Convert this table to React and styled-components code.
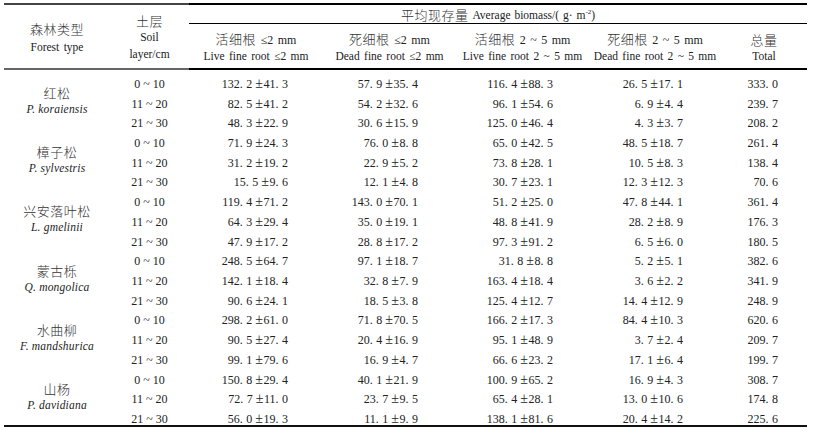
import React from "react";
import styled, { createGlobalStyle } from "styled-components";

const COLS = "106px 79px 134px 133px 133px 132px 86px";

const Global = createGlobalStyle`
  html, body { margin: 0; padding: 0; background: #fff; }
  body { font-family: "Liberation Serif", "Noto Sans CJK SC", serif; color: #222; }
`;

const Page = styled.div`
  padding: 3px 0 0 4px;
  width: 803px;
`;

const HeaderGrid = styled.div`
  display: grid;
  grid-template-columns: ${COLS};
  grid-template-rows: 2px 18px 1px 44px 2px;
`;

const Rule = styled.div`
  grid-row: ${(p) => p.$row};
  grid-column: ${(p) => p.$col};
  background: ${(p) => p.$tone};
`;

const HeadStack = styled.div`
  grid-row: 2 / 5;
  grid-column: ${(p) => p.$col};
  display: flex;
  flex-direction: column;
  align-items: center;
  justify-content: center;
  padding-top: ${(p) => p.$pt || 0}px;
  line-height: ${(p) => p.$lh}px;
`;

const Title = styled.div`
  grid-row: 2;
  grid-column: 3 / -1;
  display: flex;
  align-items: center;
  justify-content: center;
  gap: 4px;
  line-height: 18px;
  padding-top: 2px;
`;

const SubHead = styled.div`
  grid-row: 4;
  grid-column: ${(p) => p.$col};
  display: flex;
  flex-direction: column;
  align-items: center;
  justify-content: center;
  padding-top: 3px;
  line-height: 16px;
  white-space: nowrap;
`;

const Cn = styled.span`
  font-family: "Noto Sans CJK SC", sans-serif;
  font-weight: 300;
  font-size: 13px;
  letter-spacing: 0.5px;
  color: #333;
`;

const En = styled.span`
  font-family: "Liberation Serif", serif;
  font-size: 11.5px;
  word-spacing: ${(p) => p.$ws ?? 1.5}px;
  white-space: nowrap;
  sup { font-size: 7px; vertical-align: 5px; line-height: 0; }
`;

const Unit = styled.span`
  font-family: "Liberation Serif", serif;
  font-size: 12px;
  word-spacing: 1.5px;
`;

const BodyGrid = styled.div`
  display: grid;
  grid-template-columns: ${COLS};
  grid-auto-rows: 19.72px;
`;

const Group = styled.div`
  grid-row: span 3;
  display: flex;
  flex-direction: column;
  align-items: center;
  justify-content: center;
  line-height: 17px;
  padding-top: 3px;
`;

const Latin = styled.span`
  font-family: "Liberation Serif", serif;
  font-style: italic;
  font-size: 11.5px;
  letter-spacing: 0.2px;
`;

const Cell = styled.div`
  display: flex;
  align-items: center;
  justify-content: ${(p) => (p.$center ? "center" : "flex-end")};
  padding-right: ${(p) => p.$pr || 0}px;
  padding-top: 8px;
  line-height: 12px;
  font-family: "Liberation Serif", serif;
  font-size: 12px;
  white-space: pre;
`;

const Dot = styled.span`
  margin-right: 3.5px;
`;

const Pm = styled.span`
  font-size: 14px;
  line-height: 0;
  margin-right: 0.5px;
`;

const BottomRule = styled.div`
  height: 2px;
  background: #111;
`;

const withDots = (s, k) => {
  const parts = s.split(".");
  return parts.map((p, i) =>
    i < parts.length - 1 ? (
      <React.Fragment key={k + i}>
        {p}
        <Dot>.</Dot>
      </React.Fragment>
    ) : (
      <React.Fragment key={k + i}>{p}</React.Fragment>
    )
  );
};

const Num = ({ v }) => {
  const [a, b] = v.split("±");
  if (b === undefined) return withDots(a, "a");
  return (
    <>
      {withDots(a, "a")}
      <Pm>±</Pm>
      {withDots(b, "b")}
    </>
  );
};

const groups = [
  { cn: "红松", la: "P. koraiensis", rows: [
    ["0 ~ 10", "132.2 ±41.3", "57.9 ±35.4", "116.4 ±88.3", "26.5 ±17.1", "333.0"],
    ["11 ~ 20", "82.5 ±41.2", "54.2 ±32.6", "96.1 ±54.6", "6.9 ±4.4", "239.7"],
    ["21 ~ 30", "48.3 ±22.9", "30.6 ±15.9", "125.0 ±46.4", "4.3 ±3.7", "208.2"],
  ] },
  { cn: "樟子松", la: "P. sylvestris", rows: [
    ["0 ~ 10", "71.9 ±24.3", "76.0 ±8.8", "65.0 ±42.5", "48.5 ±18.7", "261.4"],
    ["11 ~ 20", "31.2 ±19.2", "22.9 ±5.2", "73.8 ±28.1", "10.5 ±8.3", "138.4"],
    ["21 ~ 30", "15.5 ±9.6", "12.1 ±4.8", "30.7 ±23.1", "12.3 ±12.3", "70.6"],
  ] },
  { cn: "兴安落叶松", la: "L. gmelinii", rows: [
    ["0 ~ 10", "119.4 ±71.2", "143.0 ±70.1", "51.2 ±25.0", "47.8 ±44.1", "361.4"],
    ["11 ~ 20", "64.3 ±29.4", "35.0 ±19.1", "48.8 ±41.9", "28.2 ±8.9", "176.3"],
    ["21 ~ 30", "47.9 ±17.2", "28.8 ±17.2", "97.3 ±91.2", "6.5 ±6.0", "180.5"],
  ] },
  { cn: "蒙古栎", la: "Q. mongolica", rows: [
    ["0 ~ 10", "248.5 ±64.7", "97.1 ±18.7", "31.8 ±8.8", "5.2 ±5.1", "382.6"],
    ["11 ~ 20", "142.1 ±18.4", "32.8 ±7.9", "163.4 ±18.4", "3.6 ±2.2", "341.9"],
    ["21 ~ 30", "90.6 ±24.1", "18.5 ±3.8", "125.4 ±12.7", "14.4 ±12.9", "248.9"],
  ] },
  { cn: "水曲柳", la: "F. mandshurica", rows: [
    ["0 ~ 10", "298.2 ±61.0", "71.8 ±70.5", "166.2 ±17.3", "84.4 ±10.3", "620.6"],
    ["11 ~ 20", "90.5 ±27.4", "20.4 ±16.9", "95.1 ±48.9", "3.7 ±2.4", "209.7"],
    ["21 ~ 30", "99.1 ±79.6", "16.9 ±4.7", "66.6 ±23.2", "17.1 ±6.4", "199.7"],
  ] },
  { cn: "山杨", la: "P. davidiana", rows: [
    ["0 ~ 10", "150.8 ±29.4", "40.1 ±21.9", "100.9 ±65.2", "16.9 ±4.3", "308.7"],
    ["11 ~ 20", "72.7 ±11.0", "23.7 ±9.5", "65.4 ±28.1", "13.0 ±10.6", "174.8"],
    ["21 ~ 30", "56.0 ±19.3", "11.1 ±9.9", "138.1 ±81.6", "20.4 ±14.2", "225.6"],
  ] },
];

const PAD = [0, 35, 38, 36, 38, 29];

const subHeads = [
  { cn: "活细根", u: "≤2 mm", en: "Live fine root ≤2 mm" },
  { cn: "死细根", u: "≤2 mm", en: "Dead fine root ≤2 mm" },
  { cn: "活细根", u: "2 ~ 5 mm", en: "Live fine root 2 ~ 5 mm" },
  { cn: "死细根", u: "2 ~ 5 mm", en: "Dead fine root 2 ~ 5 mm" },
  { cn: "总量", u: "", en: "Total" },
];

export default function App() {
  return (
    <>
      <Global />
      <Page>
        <HeaderGrid>
          <Rule $row="1" $col="1 / 3" $tone="#444" />
          <Rule $row="1" $col="3 / -1" $tone="#000" />
          <HeadStack $col="1" $lh={18} $pt={3}>
            <Cn>森林类型</Cn>
            <En>Forest type</En>
          </HeadStack>
          <HeadStack $col="2" $lh={17} $pt={2}>
            <Cn>土层</Cn>
            <En>Soil</En>
            <En>layer/cm</En>
          </HeadStack>
          <Title>
            <Cn>平均现存量</Cn>
            <En $ws={1}>
              Average biomass/( g· m<sup>-2</sup>)
            </En>
          </Title>
          <Rule $row="3" $col="3 / -1" $tone="#000" />
          {subHeads.map((s, i) => (
            <SubHead key={i} $col={i + 3}>
              <span>
                <Cn>{s.cn}</Cn>
                {s.u && <Unit> {s.u}</Unit>}
              </span>
              <En $ws={1.5}>{s.en}</En>
            </SubHead>
          ))}
          <Rule $row="5" $col="1 / 3" $tone="#666" />
          <Rule $row="5" $col="3 / -1" $tone="#000" />
        </HeaderGrid>
        <BodyGrid>
          {groups.map((g) => (
            <React.Fragment key={g.cn}>
              <Group>
                <Cn>{g.cn}</Cn>
                <Latin>{g.la}</Latin>
              </Group>
              {g.rows.map((r, ri) =>
                r.map((v, ci) => (
                  <Cell key={ri + "-" + ci} $center={ci === 0} $pr={ci === 0 ? 0 : PAD[ci]}>
                    {ci === 0 ? v : <Num v={v} />}
                  </Cell>
                ))
              )}
            </React.Fragment>
          ))}
        </BodyGrid>
        <BottomRule />
      </Page>
    </>
  );
}
